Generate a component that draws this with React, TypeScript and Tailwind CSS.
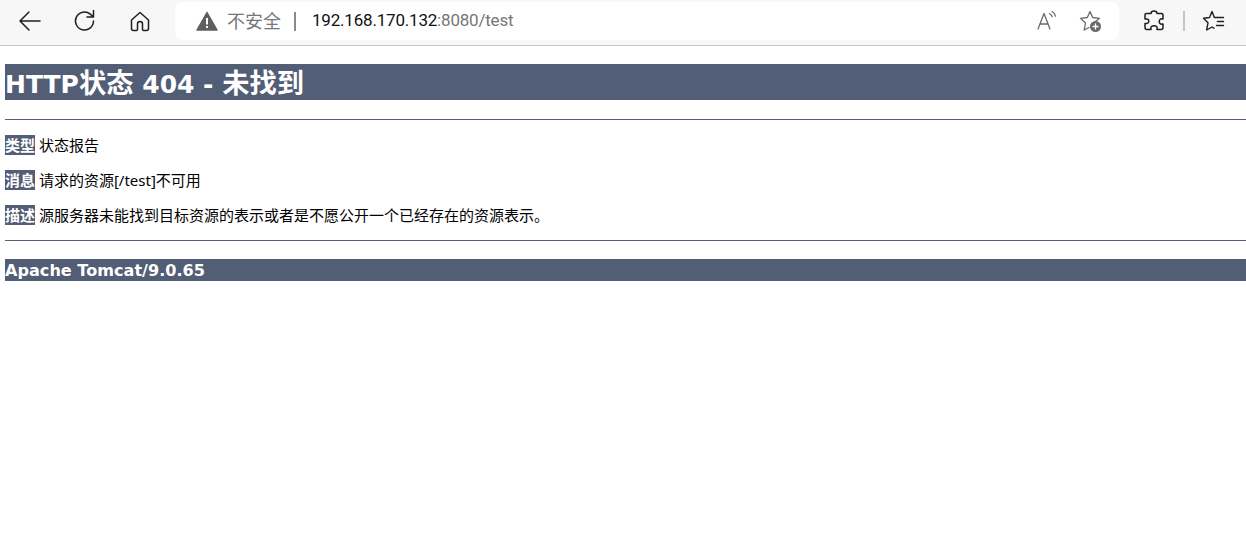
import React from 'react';

const cjk = "font-['Tahoma','Noto_Sans','Noto_Sans_CJK_SC',sans-serif]";
const heading = "font-['DejaVu_Sans','Noto_Sans_CJK_SC',sans-serif]";

const NavIcon = ({ children, className }: { children: React.ReactNode; className?: string }) => (
  <svg width="28" height="28" viewBox="0 0 28 28" fill="none" stroke="currentColor" strokeWidth="1.5" strokeLinecap="round" strokeLinejoin="round" className={className}>
    {children}
  </svg>
);

const Toolbar = () => (
  <div className="flex h-[46px] items-start border-b border-[#c6c6c6] bg-[#f7f7f7]">
    <div className="flex h-[42px] w-[175px] shrink-0 items-center pl-[16px] text-[#1f1f1f]">
      <NavIcon>
        <path d="M24 14H4M13 5l-9 9 9 9" />
      </NavIcon>
      <NavIcon className="ml-[27px]">
        <path d="M22.5 14a9 9 0 1 1-3.2-6.9L22.5 10M22.5 3.5V10H16" />
      </NavIcon>
      <NavIcon className="ml-[27px]">
        <path d="M5.5 13 14 5.5l8.500 7.500v8.500a2 2 0 0 1-2 2h-3a1 1 0 0 1-1-1v-5.500a2.500 2.500 0 0 0-5 0v5.500a1 1 0 0 1-1 1h-3a2 2 0 0 1-2-2z" />
      </NavIcon>
    </div>
    <div className={`mt-[2px] flex h-[38px] w-[944px] shrink-0 items-center rounded-lg bg-white pl-[21px] text-[18px] ${cjk}`}>
      <svg width="22" height="20" viewBox="0 0 22 20" className="shrink-0">
        <path d="M11 1.500 21 19H1z" fill="#5f5f5f" stroke="#5f5f5f" strokeWidth="1.500" strokeLinejoin="round" />
        <rect x="10" y="7" width="2" height="6.500" fill="#fff" />
        <rect x="10" y="15" width="2" height="2" fill="#fff" />
      </svg>
      <span className="ml-[9px] text-[#767676]">不安全</span>
      <span className="ml-[13px] h-[19px] w-[2px] bg-[#8a8a8a]" />
      <span className="ml-[16px] font-['Roboto',sans-serif] text-[17px] tracking-[-0.2px] text-[#111111]">
        192.168.170.132<span className="text-[#767676]">:8080/test</span>
      </span>
      <div className="ml-auto mr-[16px] flex items-center gap-[21px] text-[#6a6a6a]">
        <svg width="22" height="22" viewBox="0 0 22 22" fill="none" stroke="currentColor" strokeWidth="1.300" strokeLinecap="round" strokeLinejoin="round">
          <path d="M2 19 8 3.500 14 19M4 14h8M13.500 3.500c1.300.7 2.200 1.800 2.700 3.200M16 1.500c1.800 1 3 2.700 3.500 4.700" />
        </svg>
        <svg width="24" height="24" viewBox="0 0 24 24" fill="none" stroke="currentColor" strokeWidth="1.300" strokeLinecap="round" strokeLinejoin="round">
          <path d="M16 13 20.500 9.300 13.700 8.500 11 2.500 8.300 8.500 1.500 9.300 6.500 14 5.200 21 10 18.500" />
          <circle cx="16.500" cy="17.500" r="5.500" fill="#6a6a6a" stroke="none" />
          <path d="M16.500 15v5M14 17.500h5" stroke="#fff" strokeWidth="1.300" />
        </svg>
      </div>
    </div>
    <div className="flex h-[42px] flex-1 items-center text-[#1f1f1f]">
      <svg width="26" height="26" viewBox="0 0 26 26" fill="none" stroke="currentColor" strokeWidth="1.500" strokeLinejoin="round" className="ml-[22px]">
        <path d="M10 5.500c0-3.300 6-3.300 6 0h4.500a1.500 1.500 0 0 1 1.500 1.500v4c-3-.8-3.800 1.200-3.800 2.500s.8 3.300 3.800 2.500v3.500a2 2 0 0 1-2 2H16c.8-3-1-3.800-3-3.800s-3.800.8-3 3.800H6a2 2 0 0 1-2-2v-4c3 .5 3.800-1 3.800-2.300S7 10.500 4 11V7a1.500 1.500 0 0 1 1.500-1.500z" />
      </svg>
      <span className="ml-[16px] h-[20px] w-[1.500px] bg-[#c4c4c4]" />
      <svg width="26" height="26" viewBox="0 0 26 26" fill="none" stroke="currentColor" strokeWidth="1.400" strokeLinejoin="round" strokeLinecap="round" className="ml-[16px]">
        <path d="M16 9.500h-2.700L11 3.500 8.500 9.500 2.500 10.300 7 14.800 5.600 22 11 19 13 20.200M16.500 9.500h6M16.500 13.500h6M15.500 17.500h7" />
      </svg>
    </div>
  </div>
);

export default function App() {
  return (
    <div className={`min-h-[546px] bg-white ${cjk}`}>
      <Toolbar />
      <div className="pl-[5px] text-black">
        <h1 className={`mt-[18px] h-[36px] bg-[#525d76] text-[27.3px] font-bold leading-[40px] text-white ${heading}`}>
          <span className="text-[25px]">HTTP</span>状态<span className="text-[25px]"> 404 - </span>未找到
        </h1>
        <hr className="mt-[19px] border-t border-[#525d76]" />
        <p className="mt-[16px] h-[19px] text-[15px] leading-[19px]"><b className="bg-[#525d76] text-white">类型</b> 状态报告</p>
        <p className="mt-[16px] h-[19px] text-[15px] leading-[19px]"><b className="bg-[#525d76] text-white">消息</b> 请求的资源[/test]不可用</p>
        <p className="mt-[16px] h-[19px] text-[15px] leading-[19px]"><b className="bg-[#525d76] text-white">描述</b> 源服务器未能找到目标资源的表示或者是不愿公开一个已经存在的资源表示。</p>
        <hr className="mt-[15px] border-t border-[#525d76]" />
        <h3 className={`mt-[18px] h-[22px] bg-[#525d76] text-[16.1px] font-bold leading-[24px] text-white ${heading}`}>Apache Tomcat/9.0.65</h3>
      </div>
    </div>
  );
}
